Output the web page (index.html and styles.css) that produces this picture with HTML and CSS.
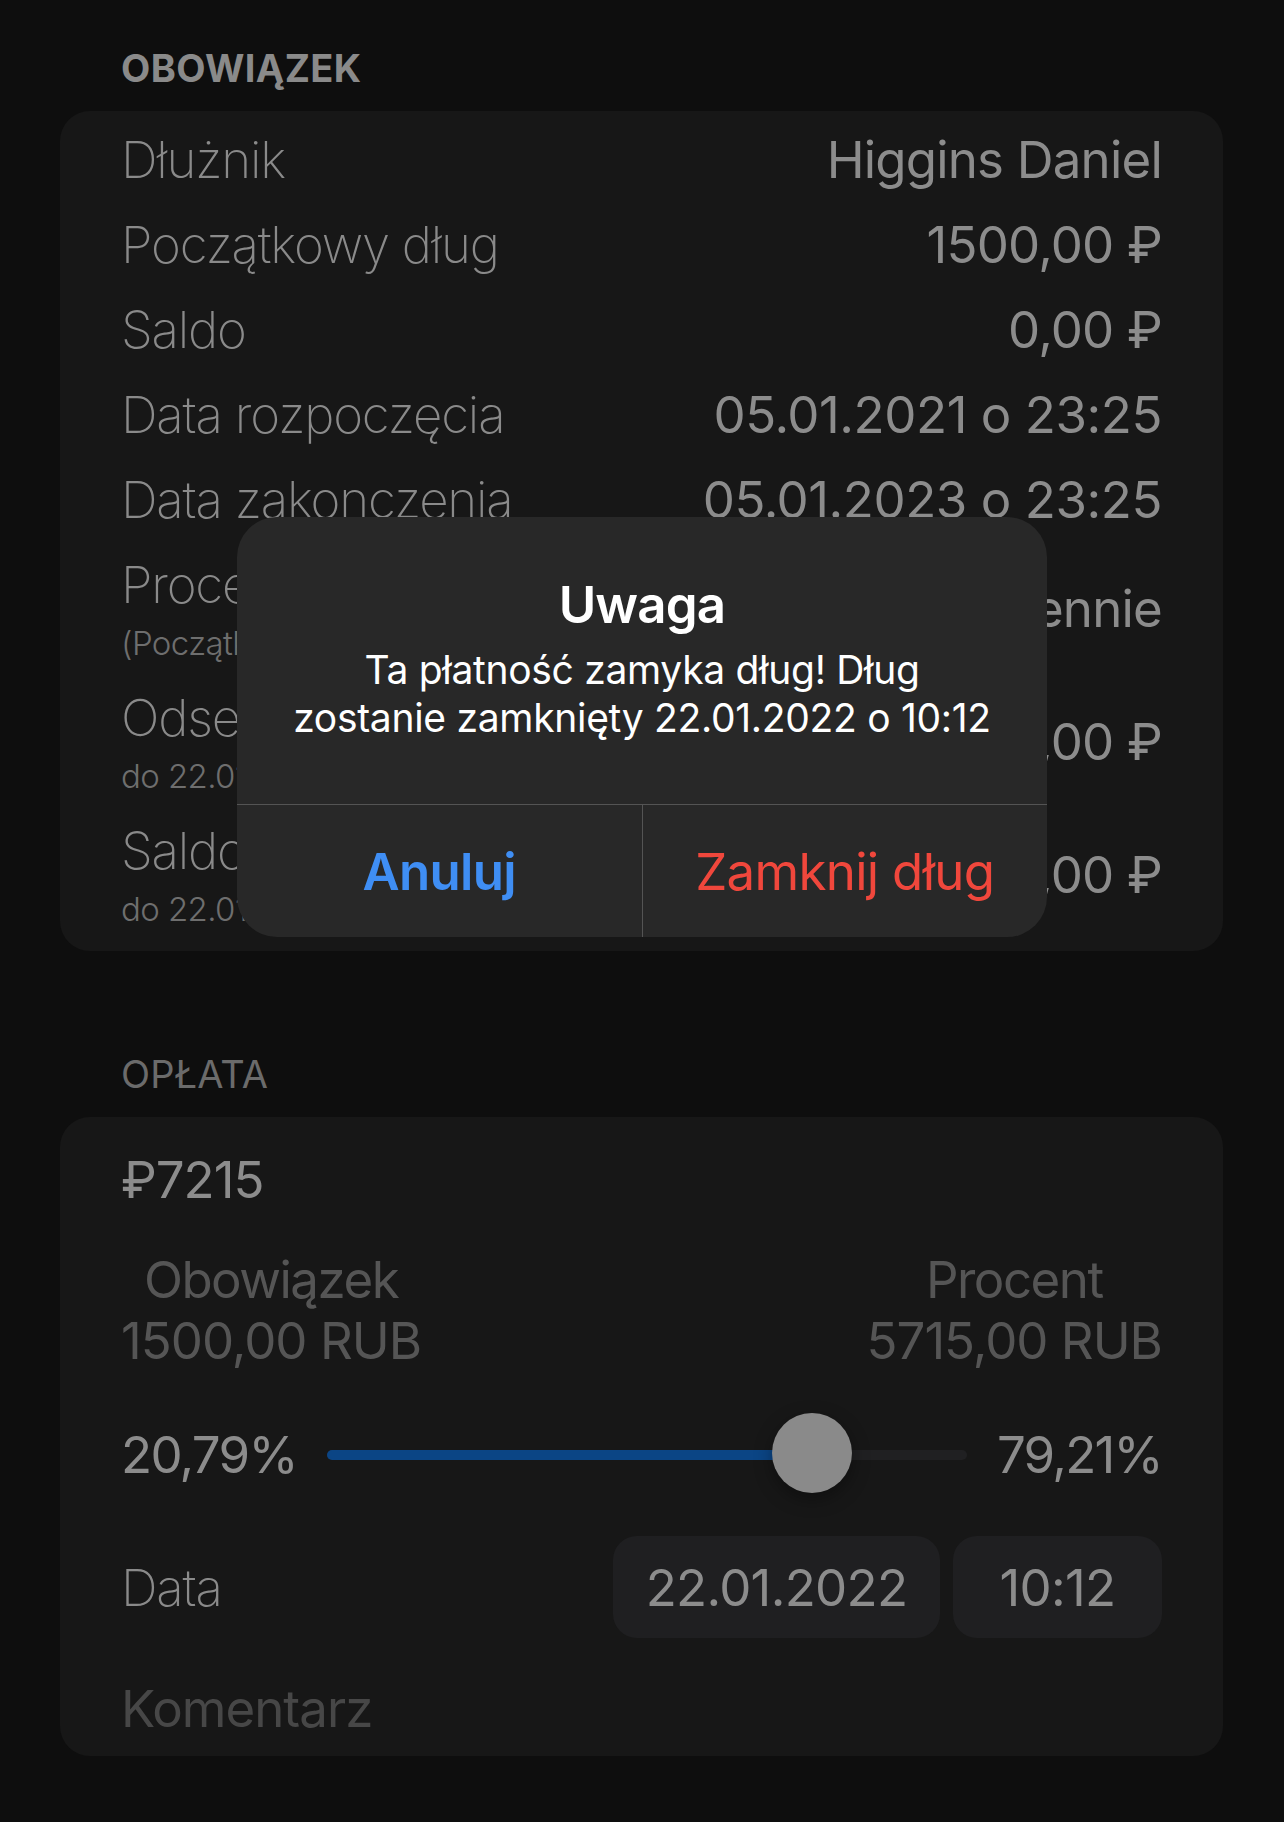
FILE: index.html
```html
<!DOCTYPE html>
<html lang="pl">
<head>
<meta charset="utf-8">
<title>Obowiązek</title>
<link rel="stylesheet" href="styles.css">
</head>
<body>
<div class="screen">
  <section class="group">
    <h2 class="group-title strong">OBOWIĄZEK</h2>
    <div class="card info">
      <div class="row"><span class="label">Dłużnik</span><span class="value">Higgins Daniel</span></div>
      <div class="row"><span class="label">Początkowy dług</span><span class="value">1500,00 ₽</span></div>
      <div class="row"><span class="label">Saldo</span><span class="value">0,00 ₽</span></div>
      <div class="row"><span class="label">Data rozpoczęcia</span><span class="value date">05.01.2021 o 23:25</span></div>
      <div class="row"><span class="label">Data zakonczenia</span><span class="value date">05.01.2023 o 23:25</span></div>
      <div class="row two">
        <div class="stack"><span class="label">Procent</span><span class="sub">(Początkowy dług)</span></div>
        <span class="value">1% dziennie</span>
      </div>
      <div class="row two">
        <div class="stack"><span class="label">Odsetki</span><span class="sub">do 22.01.2022</span></div>
        <span class="value">5715,00 ₽</span>
      </div>
      <div class="row two">
        <div class="stack"><span class="label">Saldo</span><span class="sub">do 22.01.2022</span></div>
        <span class="value">7215,00 ₽</span>
      </div>
    </div>
  </section>

  <section class="group pay">
    <h2 class="group-title">OPŁATA</h2>
    <div class="card payment">
      <div class="amount">₽7215</div>
      <div class="split">
        <div class="col"><span class="col-head">Obowiązek</span><span>1500,00 RUB</span></div>
        <div class="col"><span class="col-head">Procent</span><span>5715,00 RUB</span></div>
      </div>
      <div class="slider-row">
        <span class="pct">20,79%</span>
        <div class="track">
          <div class="fill" style="width:75.8%"></div>
          <div class="thumb" style="left:75.8%"></div>
        </div>
        <span class="pct">79,21%</span>
      </div>
      <div class="date-row">
        <span class="label">Data</span>
        <div class="pills">
          <span class="pill date">22.01.2022</span>
          <span class="pill time">10:12</span>
        </div>
      </div>
      <div class="comment">Komentarz</div>
    </div>
  </section>

  <div class="alert" role="alertdialog">
    <div class="alert-body">
      <div class="alert-title">Uwaga</div>
      <div class="alert-msg">Ta płatność zamyka dług! Dług<br>zostanie zamknięty 22.01.2022 o 10:12</div>
    </div>
    <div class="alert-actions">
      <button class="btn cancel">Anuluj</button>
      <button class="btn destroy">Zamknij dług</button>
    </div>
  </div>
</div>
</body>
</html>
```

FILE: styles.css
```css
* { box-sizing: border-box; }
html, body {
  margin: 0;
  padding: 0;
  background: #0e0e0e;
}
body {
  width: 1284px;
  height: 1822px;
  overflow: hidden;
  font-family: "Inter", "Roboto", "Liberation Sans", sans-serif;
  color: #8c8c8c;
}
.screen {
  position: relative;
  padding: 45px 61px 0 60px;
}
.group-title {
  margin: 0 0 20px 61px;
  font-size: 38px;
  line-height: 46px;
  font-weight: 400;
  color: #6b6b6b;
  letter-spacing: 0.1px;
}
.group-title.strong {
  font-weight: 700;
  color: #8a8a8a;
  letter-spacing: 0.4px;
}
.card {
  background: #171717;
  border-radius: 30px;
  padding: 6px 61px 10px 61px;
}
.row {
  display: flex;
  justify-content: space-between;
  align-items: center;
  padding: 12px 0;
  font-size: 51px;
  line-height: 61px;
}
.label {
  font-weight: 200;
  color: #8a8a8a;
  letter-spacing: -1.2px;
}
.value {
  font-weight: 400;
  color: #8c8c8c;
  letter-spacing: -0.8px;
}
.value.date {
  letter-spacing: -0.45px;
}
.stack {
  display: flex;
  flex-direction: column;
}
.sub {
  font-size: 33px;
  line-height: 40px;
  margin-top: 8px;
  font-weight: 300;
  color: #6e6e6e;
  letter-spacing: -0.6px;
}

.pay { margin-top: 100px; }
.card.payment {
  padding: 32px 61px 17px 61px;
  font-size: 51px;
  line-height: 61px;
}
.amount {
  color: #8c8c8c;
  letter-spacing: -1px;
}
.split {
  display: flex;
  justify-content: space-between;
  margin-top: 39px;
  color: #555555;
}
.col {
  display: flex;
  flex-direction: column;
  align-items: center;
  letter-spacing: -1px;
}
.col-head {
  letter-spacing: -1.5px;
}
.slider-row {
  display: flex;
  align-items: center;
  margin-top: 53px;
}
.pct {
  color: #8c8c8c;
  letter-spacing: -1.7px;
}
.track {
  position: relative;
  flex: 1;
  height: 10px;
  margin: 0 30px;
  border-radius: 5px;
  background: #202022;
}
.fill {
  height: 100%;
  border-radius: 5px;
  background: #0b4585;
}
.thumb {
  position: absolute;
  top: 50%;
  width: 80px;
  height: 80px;
  margin: -42px 0 0 -40px;
  border-radius: 50%;
  background: #8a8a8a;
  box-shadow: 0 6px 18px rgba(0, 0, 0, 0.35);
}
.date-row {
  display: flex;
  justify-content: space-between;
  align-items: center;
  margin-top: 51px;
}
.pills {
  display: flex;
  gap: 13px;
}
.pill {
  display: flex;
  align-items: center;
  justify-content: center;
  height: 102px;
  border-radius: 24px;
  background: #1f1f21;
  color: #8c8c8c;
  letter-spacing: -0.7px;
}
.pill.date { width: 327px; }
.pill.time { width: 209px; }
.comment {
  margin-top: 40px;
  color: #474747;
  letter-spacing: -1px;
}

.alert {
  position: absolute;
  left: 237px;
  top: 517px;
  width: 810px;
  height: 420px;
  border-radius: 40px;
  background: #282828;
  overflow: hidden;
  display: flex;
  flex-direction: column;
  color: #ffffff;
}
.alert-body {
  flex: 1;
  padding: 57px 30px 0;
  text-align: center;
}
.alert-title {
  font-size: 51px;
  line-height: 61px;
  font-weight: 600;
  letter-spacing: -0.8px;
}
.alert-msg {
  margin-top: 11px;
  font-size: 39px;
  line-height: 48px;
  font-weight: 400;
  letter-spacing: -0.3px;
}
.alert-actions {
  display: flex;
  height: 133px;
  border-top: 1.5px solid #545454;
}
.btn {
  flex: 1;
  border: 0;
  background: transparent;
  font-family: inherit;
  font-size: 51px;
  line-height: 61px;
  padding: 0;
  cursor: pointer;
  letter-spacing: -0.7px;
}
.btn.cancel {
  color: #3f8ef4;
  font-weight: 600;
  border-right: 1.5px solid #545454;
}
.btn.destroy {
  color: #f0473c;
  font-weight: 400;
}
```
